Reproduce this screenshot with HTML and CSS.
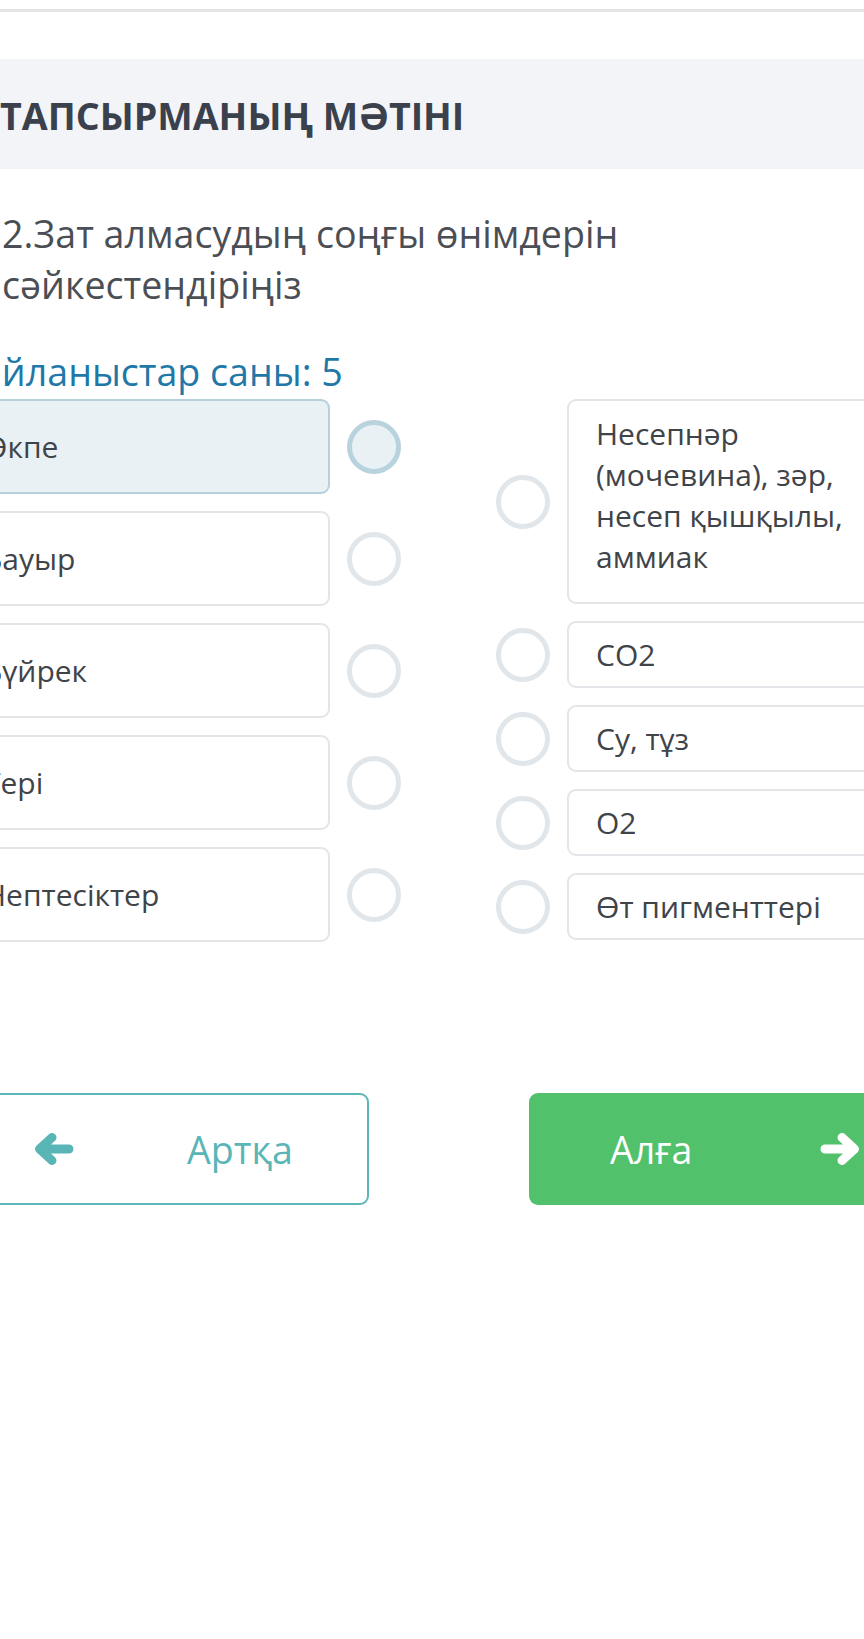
FILE: index.html
```html
<!DOCTYPE html>
<html lang="kk">
<head>
<meta charset="utf-8">
<title>Тапсырманың мәтіні</title>
<link rel="stylesheet" href="styles.css">
</head>
<body>
  <div class="topbar"></div>
  <div class="task-head"><h2 class="task-title">ТАПСЫРМАНЫҢ МӘТІНІ</h2></div>
  <p class="question">2.Зат алмасудың соңғы өнімдерін сәйкестендіріңіз</p>
  <div class="match">
    <div class="match-count">Байланыстар саны: 5</div>
    <div class="match-cols">
      <ul class="col col-left">
        <li class="item"><div class="card card-active">Өкпе</div><span class="dot dot-active"></span></li>
        <li class="item"><div class="card">Бауыр</div><span class="dot"></span></li>
        <li class="item"><div class="card">Бүйрек</div><span class="dot"></span></li>
        <li class="item"><div class="card">Тері</div><span class="dot"></span></li>
        <li class="item"><div class="card">Нептесіктер</div><span class="dot"></span></li>
      </ul>
      <ul class="col col-right">
        <li class="item"><span class="dot"></span><div class="card card-tall">Несепнәр (мочевина), зәр, несеп қышқылы, аммиак</div></li>
        <li class="item"><span class="dot"></span><div class="card">CO2</div></li>
        <li class="item"><span class="dot"></span><div class="card">Су, тұз</div></li>
        <li class="item"><span class="dot"></span><div class="card">O2</div></li>
        <li class="item"><span class="dot"></span><div class="card">Өт пигменттері</div></li>
      </ul>
    </div>
  </div>
  <div class="nav">
    <button class="btn btn-back" type="button">
      <svg class="arrow" viewBox="0 0 40 32" width="40" height="32"><path d="M35 16H6M18 4.5L5.5 16L18 27.5"/></svg>
      <span>Артқа</span>
    </button>
    <button class="btn btn-next" type="button">
      <span>Алға</span>
      <svg class="arrow" viewBox="0 0 40 32" width="40" height="32"><path d="M5 16H34M22 4.5L34.5 16L22 27.5"/></svg>
    </button>
  </div>
</body>
</html>
```

FILE: styles.css
```css
html, body {
  margin: 0;
  padding: 0;
  background: #ffffff;
}
body {
  width: 864px;
  height: 1639px;
  overflow: hidden;
  font-family: "Open Sans", "Noto Sans", sans-serif;
  color: #3f4449;
}
.topbar {
  margin-top: 9px;
  height: 3px;
  background: #e4e5e7;
}
.task-head {
  margin-top: 47px;
  height: 110px;
  box-sizing: border-box;
  padding-top: 31px;
  background: #f2f4f7;
}
.task-title {
  margin: 0;
  font-size: 37.6px;
  font-weight: 700;
  line-height: normal;
  color: #3b414c;
  white-space: nowrap;
}
.question {
  margin: 39px 0 0;
  padding-left: 2px;
  max-width: 800px;
  font-size: 37.6px;
  line-height: normal;
  color: #4b4f55;
}
.match {
  margin-left: -45px;
  margin-top: 36px;
}
.match-count {
  padding-left: 3px;
  font-size: 37.6px;
  line-height: normal;
  color: #1f78a8;
  white-space: nowrap;
}
.match-cols {
  margin-top: 2px;
  display: flex;
  gap: 95px;
  align-items: flex-start;
}
.col {
  list-style: none;
  margin: 0;
  padding: 0;
  display: flex;
  flex-direction: column;
  gap: 17px;
}
.item {
  display: flex;
  align-items: center;
  gap: 17px;
}
.card {
  box-sizing: border-box;
  border: 2px solid #e3e5e8;
  border-radius: 9px;
  background: #fff;
  font-size: 30px;
  line-height: 41px;
  color: #3f4449;
}
.col-left .card {
  width: 375px;
  padding: 25px 27px;
  white-space: nowrap;
  overflow: hidden;
}
.col-right .card {
  width: 345px;
  padding: 11px 27px;
}
.col-right .card-tall {
  padding-top: 12px;
  padding-bottom: 25px;
}
.card-active {
  background: #e9f1f5;
  border-color: #b6d0dc;
}
.dot {
  flex: none;
  box-sizing: border-box;
  width: 54px;
  height: 54px;
  border-radius: 50%;
  border: 5px solid #e1e6ea;
  background: #fff;
}
.dot-active {
  border-color: #b8d3dd;
  background: #e9f1f5;
}
.nav {
  margin-left: -45px;
  margin-top: 151px;
  display: flex;
  gap: 160px;
}
.btn {
  flex: none;
  box-sizing: border-box;
  width: 414px;
  height: 112px;
  border-radius: 9px;
  display: flex;
  align-items: center;
  font-family: "Open Sans", "Noto Sans", sans-serif;
  font-size: 37.6px;
  cursor: pointer;
}
.arrow {
  flex: none;
  fill: none;
  stroke-width: 9;
  stroke-linecap: round;
  stroke-linejoin: round;
}
.btn-back {
  border: 2px solid #5db6ba;
  background: #fff;
  color: #5ab5b7;
  padding-left: 77px;
  gap: 113px;
}
.btn-back .arrow {
  stroke: #5ab5b7;
}
.btn-next {
  border: none;
  background: #52c16b;
  color: #ffffff;
  padding-left: 81px;
  gap: 128px;
}
.btn-next .arrow {
  stroke: #ffffff;
}
```
